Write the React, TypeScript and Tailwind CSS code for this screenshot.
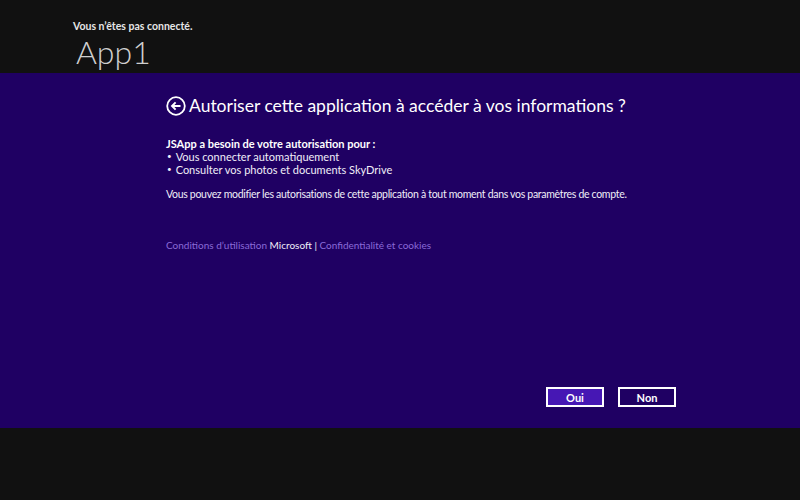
import React from "react";

export default function App() {
  return (
    <div
      className="w-[800px] h-[500px] bg-[#111111] flex flex-col text-white"
      style={{ fontFamily: 'Lato, "Open Sans", sans-serif' }}
    >
      <header className="h-[73px] pl-[73px] pt-[20px]">
        <div className="text-[10.5px] font-bold leading-[13px] text-[#e6e6e6]">Vous n’êtes pas connecté.</div>
        <div className="text-[32px] font-light leading-[38px] text-[#cfcfcf] pl-[3px]">App1</div>
      </header>

      <main className="h-[355px] bg-[#1f0063] flex flex-col pl-[166px] pr-[124px]">
        <div className="flex items-center gap-[3px] mt-[20px] h-[26px]">
          <svg width="20" height="20" viewBox="0 0 20 20" className="shrink-0">
            <circle cx="10" cy="10" r="8.8" fill="none" stroke="white" strokeWidth="1.8" />
            <path d="M14.5 10H6.2M9.6 6.4L6 10l3.6 3.6" fill="none" stroke="white" strokeWidth="1.9" />
          </svg>
          <h1 className="text-[17.5px] leading-[26px] font-normal">
            Autoriser cette application à accéder à vos informations ?
          </h1>
        </div>

        <div className="mt-[18px] text-[11px] leading-[13px] text-[#f0eef8]">
          <div className="font-bold text-white">JSApp a besoin de votre autorisation pour :</div>
          <ul>
            <li className="flex items-center gap-[4px] pl-[1px]">
              <span className="text-[8px]">•</span>
              <span>Vous connecter automatiquement</span>
            </li>
            <li className="flex items-center gap-[4px] pl-[1px]">
              <span className="text-[8px]">•</span>
              <span>Consulter vos photos et documents SkyDrive</span>
            </li>
          </ul>
          <p className="mt-[12px] text-[10.5px] tracking-[-0.3px] whitespace-nowrap">
            Vous pouvez modifier les autorisations de cette application à tout moment dans vos paramètres de compte.
          </p>
        </div>

        <div className="mt-[38px] text-[10px] leading-[13px]">
          <span className="text-[#8a6ad8]">Conditions d’utilisation</span>{" "}
          <span className="text-[#f0eef8]">Microsoft</span>{" "}
          <span className="text-[#f0eef8]">|</span>{" "}
          <span className="text-[#8a6ad8]">Confidentialité et cookies</span>
        </div>

        <div className="mt-auto mb-[21px] flex justify-end gap-[14px]">
          <button className="w-[58px] h-[20px] border-2 border-white bg-[#4617b4] text-[11px] font-bold leading-none">
            Oui
          </button>
          <button className="w-[58px] h-[20px] border-2 border-white bg-[#1f0063] text-[11px] font-bold leading-none">
            Non
          </button>
        </div>
      </main>

      <footer className="flex-1 bg-[#111111]" />
    </div>
  );
}
